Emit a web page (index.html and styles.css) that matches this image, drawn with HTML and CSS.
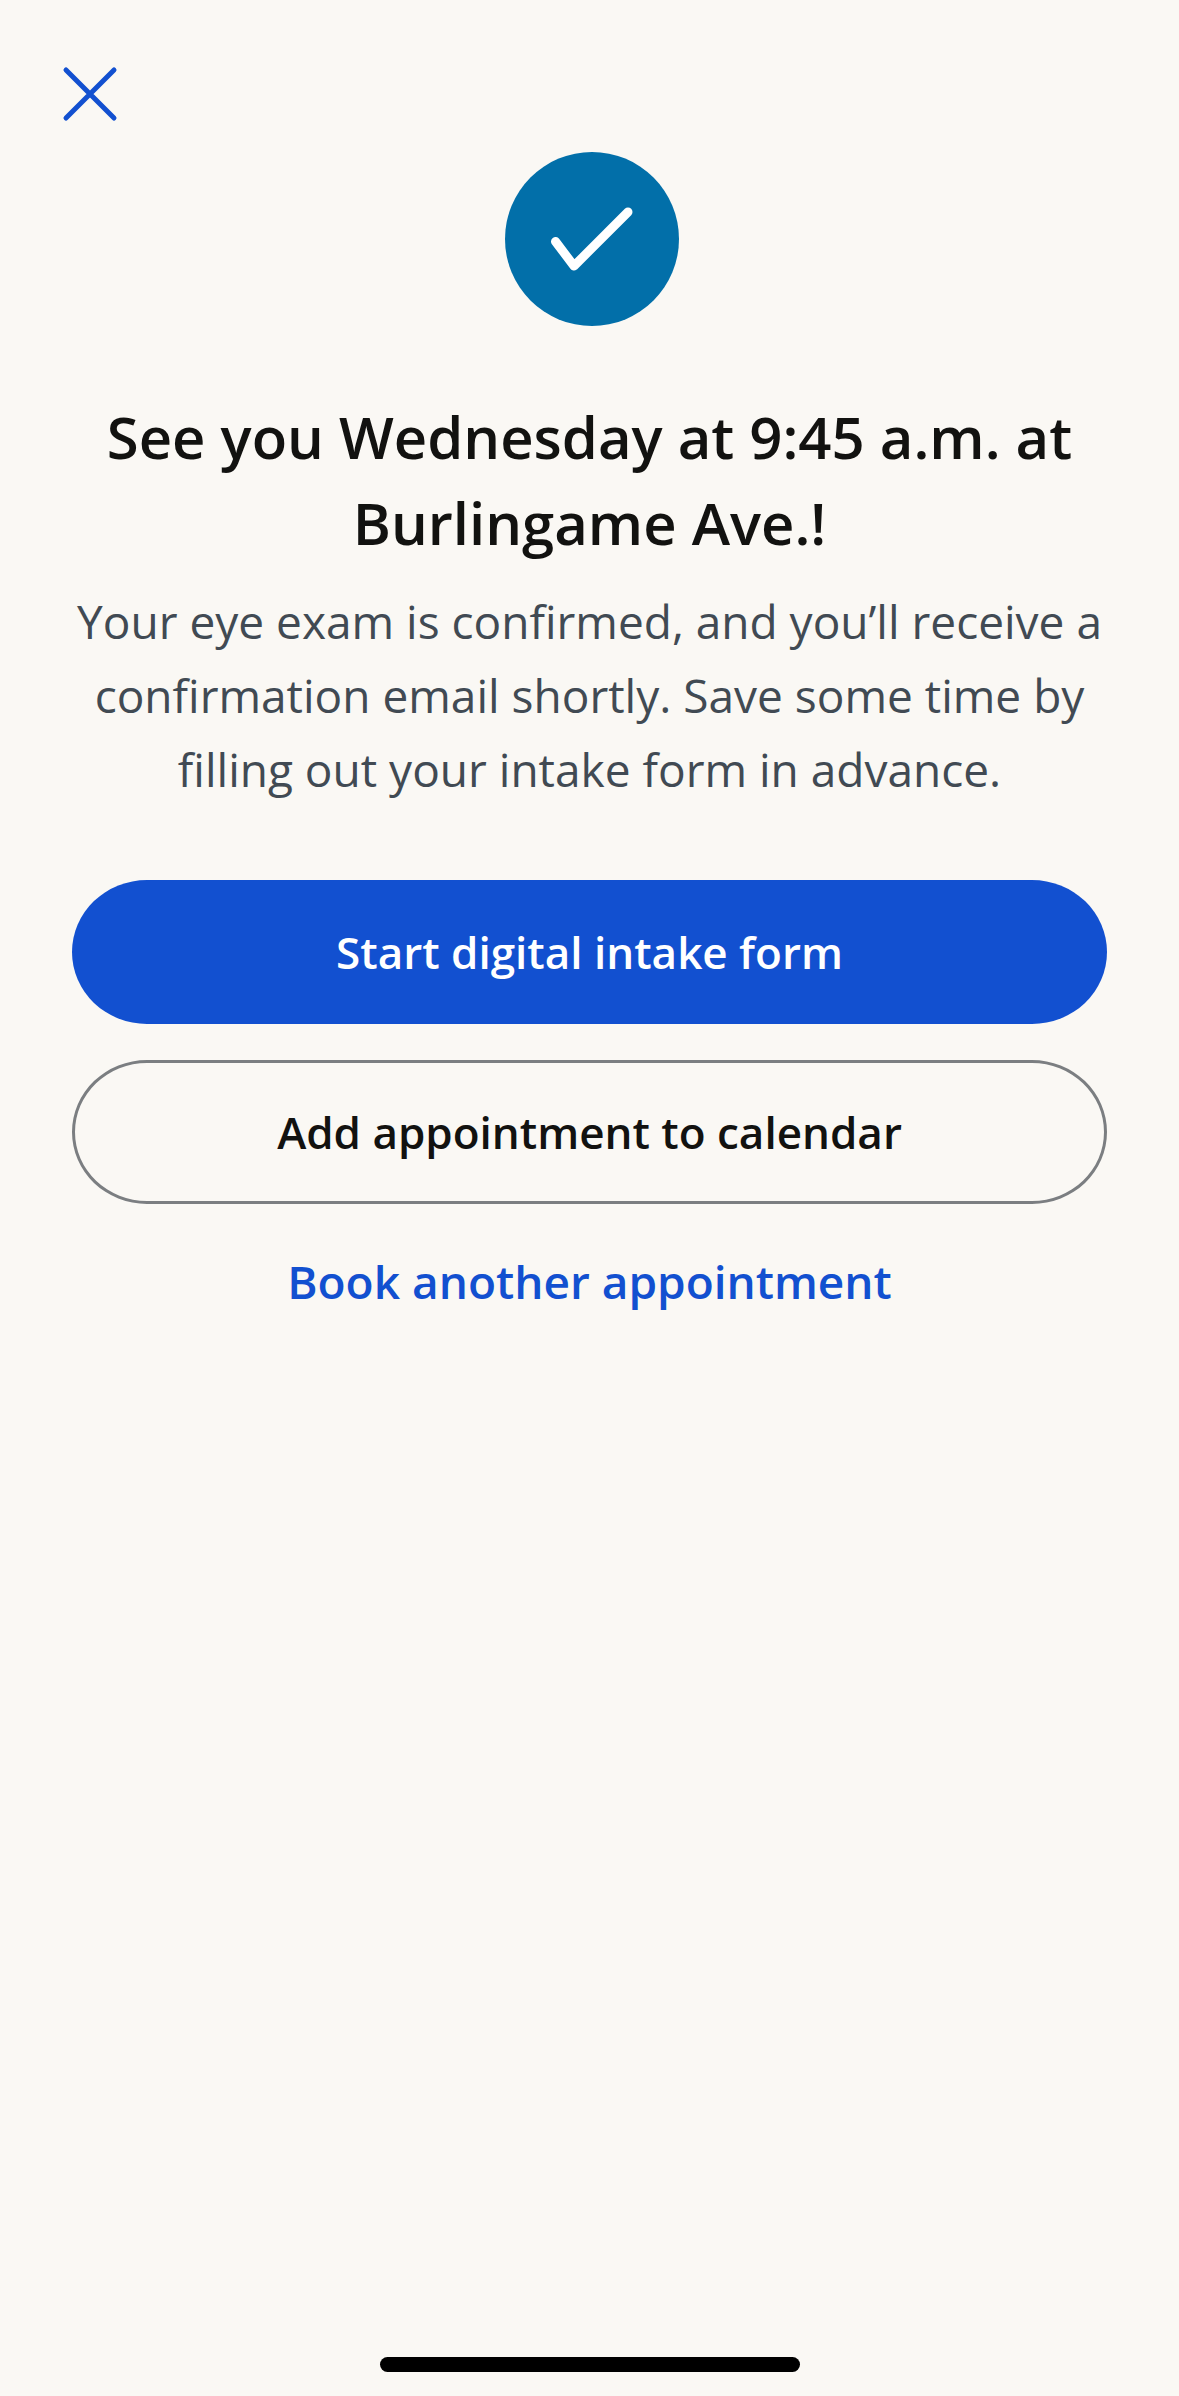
FILE: index.html
```html
<!DOCTYPE html>
<html lang="en">
<head>
    <meta charset="UTF-8">
    <meta name="viewport" content="width=device-width, initial-scale=1.0">
    <title>Appointment confirmed</title>
    <link rel="stylesheet" href="styles.css">
</head>
<body>

    <header class="top-bar">
        <button class="close-btn" type="button" aria-label="Close">
            <svg class="close-icon" viewBox="0 0 60 60" aria-hidden="true">
                <path d="M6 6 L54 54 M54 6 L6 54"/>
            </svg>
        </button>
    </header>

    <main class="confirmation">
        <svg class="check-icon" viewBox="0 0 178 174" aria-hidden="true">
            <circle cx="91" cy="87" r="87"/>
            <path d="M54.5 89.5 L73 114 L127 60"/>
        </svg>

        <h1>See you Wednesday at 9:45 a.m. at Burlingame Ave.!</h1>
        <p class="message">Your eye exam is confirmed, and you’ll receive a confirmation email shortly. Save some time by filling out your intake form in advance.</p>

        <div class="actions">
            <button class="btn btn-primary" type="button">Start digital intake form</button>
            <button class="btn btn-outline" type="button">Add appointment to calendar</button>
            <a class="book-link" href="#">Book another appointment</a>
        </div>
    </main>

    <div class="home-indicator"></div>

</body>
</html>
```

FILE: styles.css
```css
* {
    box-sizing: border-box;
}
body {
    font-family: "Open Sans", Roboto, sans-serif;
    margin: 0;
    background-color: #faf8f4;
    color: #121210;
    display: flex;
    flex-direction: column;
    min-height: 100vh;
    padding-bottom: 24px;
}
.top-bar {
    display: flex;
    padding: 64px 60px 28px;
}
.close-btn {
    padding: 0;
    background: none;
    border: none;
    cursor: pointer;
}
.close-icon {
    display: block;
    width: 60px;
    height: 60px;
    fill: none;
    stroke: #1250d0;
    stroke-width: 5;
    stroke-linecap: round;
}
.confirmation {
    display: flex;
    flex-direction: column;
    align-items: center;
    padding: 0 72px;
    text-align: center;
}
.check-icon {
    width: 178px;
    height: 174px;
    fill: #026fa9;
}
.check-icon path {
    fill: none;
    stroke: #fff;
    stroke-width: 9;
    stroke-linecap: round;
    stroke-linejoin: round;
}
h1 {
    margin: 68px 0 18px;
    font-size: 58px;
    line-height: 86px;
    font-weight: 600;
}
.message {
    margin: 0 0 74px;
    font-size: 46px;
    line-height: 74px;
    color: #414a53;
}
.actions {
    display: flex;
    flex-direction: column;
    align-items: center;
    gap: 36px;
    width: 100%;
}
.btn {
    width: 100%;
    height: 144px;
    font-family: inherit;
    font-size: 44px;
    font-weight: 600;
    border: none;
    border-radius: 75px / 72px;
    cursor: pointer;
}
.btn-primary {
    color: white;
    background-color: #1250d0;
}
.btn-outline {
    color: #121210;
    background-color: transparent;
    border: 3px solid #7b7e81;
}
.book-link {
    font-size: 46px;
    line-height: 82px;
    font-weight: 600;
    color: #1250d0;
    text-decoration: none;
}
.home-indicator {
    width: 420px;
    height: 15px;
    margin: auto auto 0;
    background-color: black;
    border-radius: 8px;
}
```
